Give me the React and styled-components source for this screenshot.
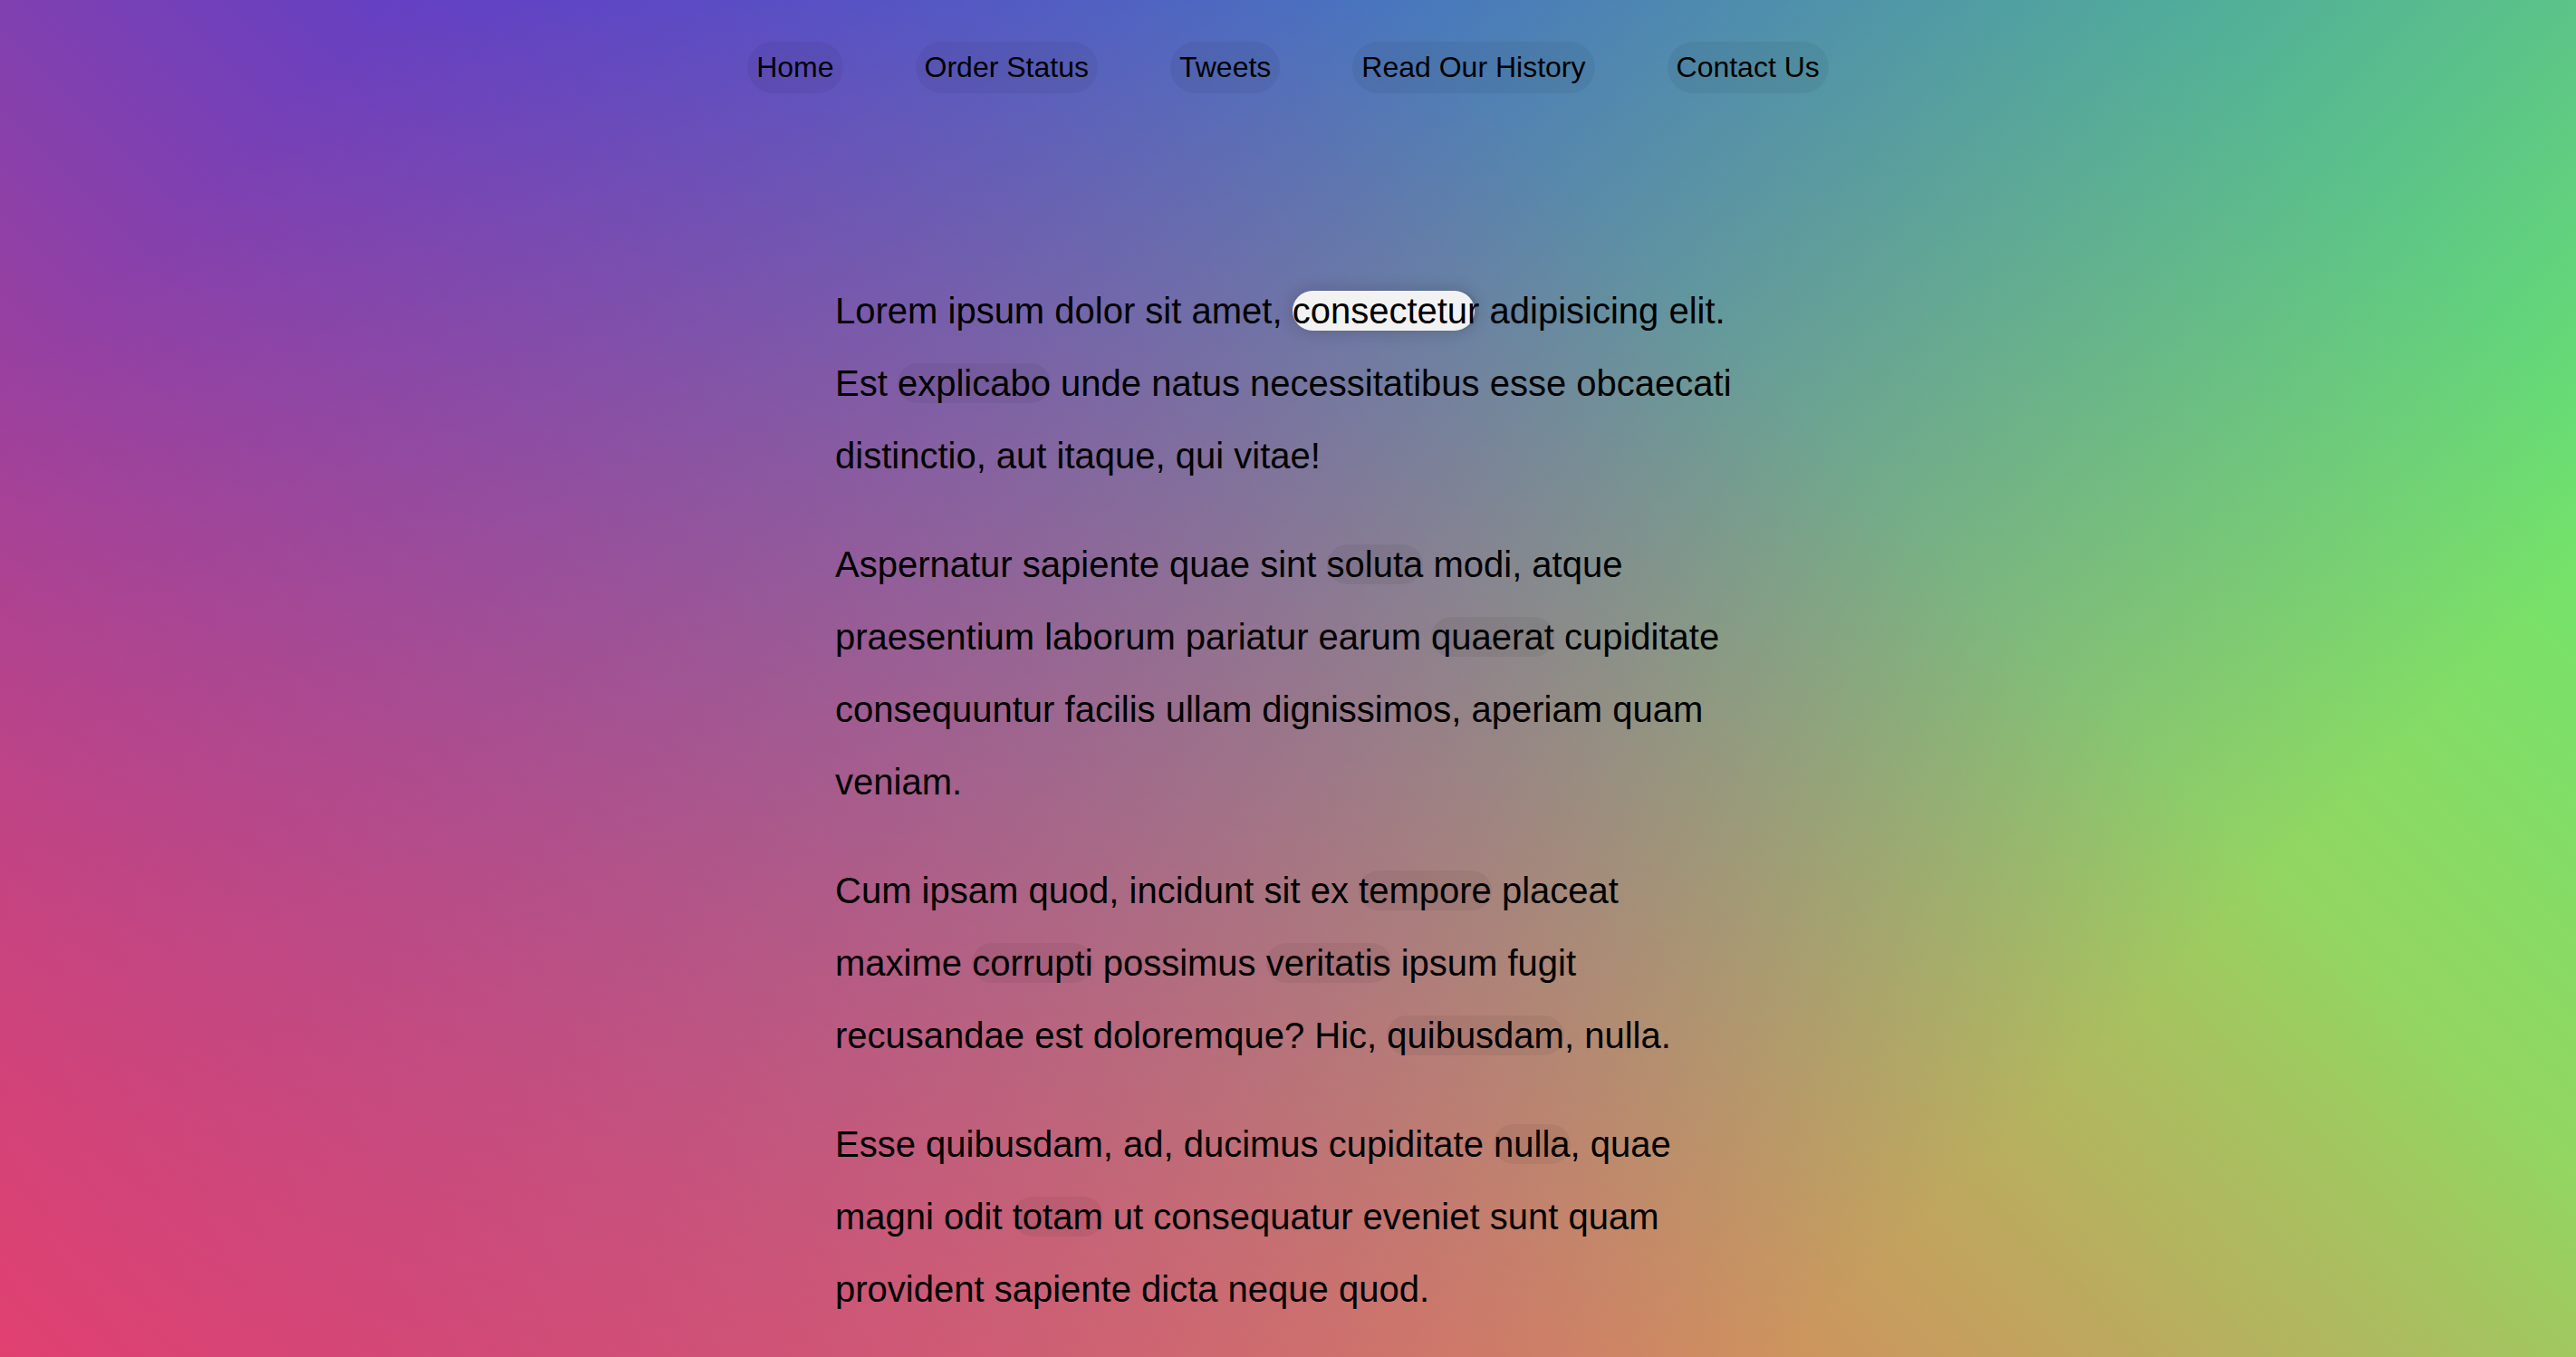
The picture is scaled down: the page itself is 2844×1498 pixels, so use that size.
import React from "react";
import styled, { createGlobalStyle, css } from "styled-components";

const GlobalStyle = createGlobalStyle`
  html { box-sizing: border-box; }
  *, *::before, *::after { box-sizing: inherit; }
  body {
    margin: 0;
    min-height: 100vh;
    font-family: "Liberation Sans", Arial, Helvetica, sans-serif;
    color: #000;
    background:
      linear-gradient(45deg, rgba(224, 64, 112, 1) 0%, rgba(224, 64, 112, 0) 70%),
      linear-gradient(135deg, rgba(29, 64, 242, 1) 10%, rgba(29, 64, 242, 0) 80%),
      linear-gradient(225deg, rgba(108, 230, 108, 1) 10%, rgba(108, 230, 108, 0) 80%),
      linear-gradient(315deg, rgb(245, 171, 71) 0%, rgb(245, 171, 71) 100%);
  }
`;

const Page = styled.div`
  min-height: 100vh;
  display: flex;
  flex-direction: column;
`;

const Menu = styled.ul`
  list-style: none;
  margin: 0;
  padding: 46px 0 0;
  display: flex;
  justify-content: center;
`;

const MenuItem = styled.li`
  margin: 0;
  padding: 0;
`;

const MenuLink = styled.a`
  display: inline-block;
  padding: 10px;
  margin: 0 40px;
  font-size: 32px;
  line-height: normal;
  color: #000;
  text-decoration: none;
  background: rgba(0, 0, 0, 0.05);
  border-radius: 40px;
`;

const Wrapper = styled.main`
  width: 1000px;
  margin: 0 auto;
  padding: 200px 0 0;
  display: flex;
  flex-direction: column;
  gap: 40px;
  font-size: 40px;
  line-height: 2;
`;

const Para = styled.p`
  margin: 0;
`;

const TextLink = styled.a`
  color: #000;
  text-decoration: none;
  background: rgba(0, 0, 0, 0.05);
  border-radius: 40px;
  ${(p) =>
    p.$active &&
    css`
      position: relative;
      &::before {
        content: "";
        position: absolute;
        left: 0;
        top: 0;
        bottom: 0;
        right: 5px;
        background: #fff;
        border-radius: 40px;
        box-shadow: 0 0 20px rgba(0, 0, 0, 0.2);
        z-index: -1;
      }
    `}
`;

const navItems = ["Home", "Order Status", "Tweets", "Read Our History", "Contact Us"];

export default function App() {
  return (
    <>
      <GlobalStyle />
      <Page>
        <nav>
          <Menu>
            {navItems.map((n) => (
              <MenuItem key={n}>
                <MenuLink href="#">{n}</MenuLink>
              </MenuItem>
            ))}
          </Menu>
        </nav>
        <Wrapper>
          <Para>
            Lorem ipsum dolor sit amet, <TextLink href="#" $active>consectetur</TextLink> adipisicing elit. Est{" "}
            <TextLink href="#">explicabo</TextLink> unde natus necessitatibus esse obcaecati distinctio, aut itaque, qui vitae!
          </Para>
          <Para>
            Aspernatur sapiente quae sint <TextLink href="#">soluta</TextLink> modi, atque praesentium laborum pariatur earum{" "}
            <TextLink href="#">quaerat</TextLink> cupiditate consequuntur facilis ullam dignissimos, aperiam quam veniam.
          </Para>
          <Para>
            Cum ipsam quod, incidunt sit ex <TextLink href="#">tempore</TextLink> placeat maxime{" "}
            <TextLink href="#">corrupti</TextLink> possimus <TextLink href="#">veritatis</TextLink> ipsum fugit recusandae est
            doloremque? Hic, <TextLink href="#">quibusdam</TextLink>, nulla.
          </Para>
          <Para>
            Esse quibusdam, ad, ducimus cupiditate <TextLink href="#">nulla</TextLink>, quae magni odit{" "}
            <TextLink href="#">totam</TextLink> ut consequatur eveniet sunt quam provident sapiente dicta neque quod.
          </Para>
        </Wrapper>
      </Page>
    </>
  );
}
